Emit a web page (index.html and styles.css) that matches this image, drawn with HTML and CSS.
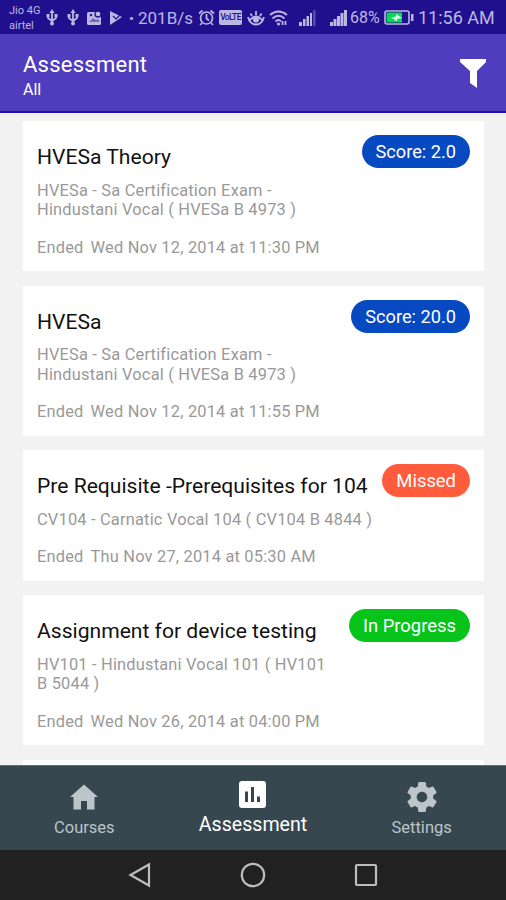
FILE: index.html
```html
<!DOCTYPE html>
<html lang="en">
<head>
  <meta charset="UTF-8" />
  <meta name="viewport" content="width=device-width, initial-scale=1.0"/>
  <title>Assessment</title>
  <link rel="stylesheet" href="styles.css">
</head>
<body>
  <div class="status-bar">
    <div class="carrier"><span>Jio 4G</span><span>airtel</span></div>
    <svg class="usb" width="12" height="17" viewBox="0 0 12 17"><path d="M6 2v13M2 6v3l4 3 4-3V6" fill="none" stroke="currentColor" stroke-width="1.8"/><path d="M3.5 4L6 0l2.5 4zM.5 5h3v3h-3zM8.500 5h3v3h-3z" fill="currentColor"/><circle cx="6" cy="14.500" r="2" fill="currentColor"/></svg>
    <svg class="usb2" width="12" height="17" viewBox="0 0 12 17"><path d="M6 2v13M2 6v3l4 3 4-3V6" fill="none" stroke="currentColor" stroke-width="1.8"/><path d="M3.500 4L6 0l2.500 4zM.5 5h3v3h-3zM8.500 5h3v3h-3z" fill="currentColor"/><circle cx="6" cy="14.500" r="2" fill="currentColor"/></svg>
    <svg class="photo" width="15" height="16" viewBox="0 0 15 16"><rect y="2" width="14" height="13" rx="1.500" fill="currentColor"/><path d="M2 12l4-4 3 2 2-1 2 3z" fill="#7267bb"/><circle cx="4" cy="5" r="1.200" fill="#21108d"/><circle cx="11" cy="4" r="3" fill="currentColor" stroke="#21108d" stroke-width="1.300"/></svg>
    <svg class="play" width="13" height="14" viewBox="0 0 13 14"><path d="M1 0l12 6L1 14z" fill="currentColor"/><path d="M4 5l3 3 5-5" fill="none" stroke="#21108d" stroke-width="1.200"/></svg>
    <span class="dot">·</span>
    <span class="speed">201B/s</span>
    <svg class="alarm" width="17" height="17" viewBox="0 0 17 17" fill="none" stroke="currentColor" stroke-width="1.700"><circle cx="8.500" cy="9" r="6"/><path d="M1 4.500L4.500 1.500M16 4.500l-3.500-3M8.500 5v4.500l2.500 2M4 14l-2 2M13 14l2 2"/></svg>
    <span class="volte">VoLTE</span>
    <svg class="eye" width="18" height="16" viewBox="0 0 18 16" fill="none" stroke="currentColor" stroke-width="1.800"><path d="M1 7Q3 14.500 9 14.500T17 7M3 10Q9 3 15 10M9 5V1M5 6L3.500 3.500M13 6l1.500-2.500"/><circle cx="9" cy="9.500" r="2.200" fill="currentColor"/></svg>
    <svg class="wifi" width="19" height="16" viewBox="0 0 19 16" fill="none" stroke="currentColor" stroke-width="1.800"><path d="M1 5Q9.500-2 18 5M3.500 8.500Q9.500 3 15.500 8.500M6.500 11.500Q9.500 8.500 12 11.500"/><circle cx="9.500" cy="14" r="1.500" fill="currentColor" stroke="none"/><path d="M13.500 11v4M16.500 11v4"/></svg>
    <svg class="signal" width="17" height="16" viewBox="0 0 17 16" fill="currentColor"><path d="M0 12h3v4H0zM4 9h2.500v7H4zM7.500 6H10v10H7.500zM11 3h2v13h-2z"/><path d="M14 0h2.500v16H14z" opacity=".35"/></svg>
    <svg class="signal2" width="17" height="16" viewBox="0 0 17 16" fill="currentColor"><path d="M0 12h3v4H0zM3.500 9h3v7h-3zM7 6h3v10H7zM10.500 3h3v13h-3zM14 0h3v16h-3z"/></svg>
    <span class="percent">68%</span>
    <svg class="battery" width="30" height="15" viewBox="0 0 30 15"><rect x="1" y="1" width="24" height="13" rx="2" fill="none" stroke="currentColor" stroke-width="1.600"/><path d="M27 4h2.500v7H27z" fill="currentColor"/><path d="M2.500 2.500H18v10H2.500z" fill="#09d755"/><path d="M7 7.500l5-1V4l6 4-5 1v2.500z" fill="#d8ffe7"/></svg>
    <span class="clock">11:56 AM</span>
  </div>

  <header class="toolbar">
    <div>
      <h1>Assessment</h1>
      <p>All</p>
    </div>
    <svg width="28" height="32" viewBox="0 0 28 32"><path d="M1 1h26v3l-9 9v17l-7-5V13L1 4z" fill="#fff"/></svg>
  </header>

  <main class="list">
    <div class="card">
      <div class="info">
        <h2>HVESa Theory</h2>
        <p class="course">HVESa - Sa Certification Exam - Hindustani Vocal ( HVESa B 4973 )</p>
        <p class="ended"><span>Ended</span>Wed Nov 12, 2014 at 11:30 PM</p>
      </div>
      <span class="badge score">Score: 2.0</span>
    </div>
    <div class="card">
      <div class="info">
        <h2>HVESa</h2>
        <p class="course">HVESa - Sa Certification Exam - Hindustani Vocal ( HVESa B 4973 )</p>
        <p class="ended"><span>Ended</span>Wed Nov 12, 2014 at 11:55 PM</p>
      </div>
      <span class="badge score">Score: 20.0</span>
    </div>
    <div class="card">
      <div class="info">
        <h2>Pre Requisite -Prerequisites for 104</h2>
        <p class="course">CV104 - Carnatic Vocal 104 ( CV104 B 4844 )</p>
        <p class="ended"><span>Ended</span>Thu Nov 27, 2014 at 05:30 AM</p>
      </div>
      <span class="badge missed">Missed</span>
    </div>
    <div class="card">
      <div class="info">
        <h2>Assignment for device testing</h2>
        <p class="course">HV101 - Hindustani Vocal 101 ( HV101 B 5044 )</p>
        <p class="ended"><span>Ended</span>Wed Nov 26, 2014 at 04:00 PM</p>
      </div>
      <span class="badge progress">In Progress</span>
    </div>
    <div class="card"></div>
  </main>

  <nav class="tabs">
    <a class="tab">
      <svg width="28" height="25" viewBox="0 0 28 25"><path d="M14 0L0 12.500h3.500V25H11v-8.500h6V25h7.500V12.500H28z" fill="currentColor"/></svg>
      <span>Courses</span>
    </a>
    <a class="tab active">
      <svg width="27" height="27" viewBox="0 0 27 27"><rect width="27" height="27" rx="3" fill="currentColor"/><path d="M6 10.500h3V21H6zM12 6h3v15h-3zM18 15.500h3V21h-3z" fill="#37474f"/></svg>
      <span>Assessment</span>
    </a>
    <a class="tab">
      <svg width="30" height="30" viewBox="2 2 20 20"><path fill="currentColor" d="M19.430 12.980c.04-.32.07-.64.07-.98s-.03-.66-.07-.98l2.110-1.650c.19-.15.24-.42.12-.64l-2-3.460c-.12-.22-.39-.3-.61-.22l-2.490 1c-.52-.4-1.080-.73-1.690-.98l-.38-2.650C14.460 2.180 14.250 2 14 2h-4c-.25 0-.46.18-.49.42l-.38 2.650c-.61.25-1.170.59-1.690.98l-2.490-1c-.23-.09-.49 0-.61.22l-2 3.460c-.13.22-.07.49.12.64l2.110 1.650c-.04.32-.07.65-.07.98s.03.66.07.98l-2.110 1.650c-.19.15-.24.42-.12.64l2 3.460c.12.22.39.3.61.22l2.490-1c.52.4 1.080.73 1.690.98l.38 2.650c.03.24.24.42.49.42h4c.25 0 .46-.18.49-.42l.38-2.650c.61-.25 1.170-.59 1.690-.98l2.490 1c.23.09.49 0 .61-.22l2-3.460c.12-.22.07-.49-.12-.64l-2.110-1.650zM12 15.500c-1.930 0-3.500-1.570-3.500-3.500s1.570-3.500 3.500-3.500 3.500 1.570 3.500 3.500-1.570 3.500-3.500 3.500z"/></svg>
      <span>Settings</span>
    </a>
  </nav>

  <div class="nav-bar">
    <svg width="24" height="26" viewBox="0 0 24 26"><path d="M21 2.500v21L2.500 13z"/></svg>
    <svg width="26" height="26" viewBox="0 0 26 26"><circle cx="13" cy="13" r="11.200"/></svg>
    <svg width="24" height="26" viewBox="0 0 24 26"><rect x="2" y="3" width="20" height="20" rx="1"/></svg>
  </div>
</body>
</html>
```
FILE: styles.css
```css
* { box-sizing: border-box; }
body {
  font-family: Roboto, sans-serif; background: #f2f2f2; margin: 0;
  height: 900px; display: flex; flex-direction: column; overflow: hidden;
}
h1, h2, p { margin: 0; font-weight: 400; }
svg { display: block; flex: none; }

.status-bar {
  height: 34px; flex: none; display: flex; align-items: center;
  padding: 1px 0 0 9px; background: #21108d; color: #bdb7e4; white-space: nowrap;
}
.carrier { display: flex; flex-direction: column; width: 33px; font-size: 11px; line-height: 15px; }
.usb { margin-left: 4px; }
.usb2 { margin-left: 9px; }
.photo { margin-left: 8px; }
.play { margin-left: 7px; }
.dot { width: 17px; text-align: center; margin-left: 1px; font-size: 20px; font-weight: 700; }
.speed { width: 54px; margin-left: -2px; font-size: 17px; }
.alarm { margin-left: 6px; }
.volte {
  width: 23px; height: 15px; margin-left: 4px; border-radius: 2px; text-align: center;
  background: #bdb7e4; color: #21108d; font-size: 8.5px; line-height: 15px; letter-spacing: -0.6px; font-weight: 500;
}
.eye { margin-left: 5px; }
.wifi { margin-left: 4px; }
.signal { margin-left: 11px; }
.signal2 { margin-left: 14px; }
.percent { width: 31px; margin-left: 3px; font-size: 16px; }
.battery { margin-left: 3px; }
.clock { margin-left: 4px; font-size: 18px; }

.toolbar {
  height: 79px; flex: none; display: flex; justify-content: space-between;
  padding: 18px 19px 0 23px; background: #503dbe; color: #fff; border-bottom: 2px solid #1c10b4;
}
.toolbar h1 { font-size: 22px; line-height: 26px; letter-spacing: 0.25px; }
.toolbar p { font-size: 16px; line-height: 20px; margin-top: 2px; }
.toolbar svg { margin-top: 6px; }

.list {
  flex: 1; min-height: 0; overflow: hidden; display: flex; flex-direction: column;
  gap: 14.3px; padding: 8.3px 22px 0 23px;
}
.card {
  flex: none; min-height: 100px; display: flex; justify-content: space-between; gap: 8px;
  align-items: flex-start; background: #fff; padding: 14px;
}
.info { padding-top: 10.2px; }
.card h2 { font-size: 21.1px; line-height: 24px; color: #111; white-space: nowrap; }
.course, .ended { font-size: 16.4px; line-height: 19.6px; letter-spacing: 0.2px; color: #999; }
.course { margin-top: 11.4px; max-width: 290px; }
.card:nth-child(3) .course { max-width: none; }
.ended { margin-top: 17.8px; white-space: nowrap; }
.ended span { margin-right: 7px; }
.badge {
  flex: none; height: 33px; line-height: 34px; padding: 0 14px; border-radius: 17px;
  color: #fff; font-size: 18.4px;
}
.score { background: #0649c0; font-size: 18.2px; }
.missed { background: #ff5c3e; }
.progress { background: #06c41a; }

.tabs {
  height: 85px; flex: none; display: grid; grid-template-columns: repeat(3, 1fr);
  background: #37474f; border-top: 1px solid #60717a;
}
.tab { display: flex; flex-direction: column; align-items: center; color: #bbc5ca; font-size: 16.5px; line-height: 20px; }
.tab svg { height: 30px; margin: 16px 0 6px; }
.tab.active { color: #fff; font-size: 19.6px; }
.tab.active svg { height: 27px; margin: 15px 0 7px; }

.nav-bar {
  height: 50px; flex: none; display: flex; justify-content: center; align-items: center; gap: 88px;
  background: #212121;
}
.nav-bar svg { fill: none; stroke: #bdbdbd; stroke-width: 2.2; }
```
